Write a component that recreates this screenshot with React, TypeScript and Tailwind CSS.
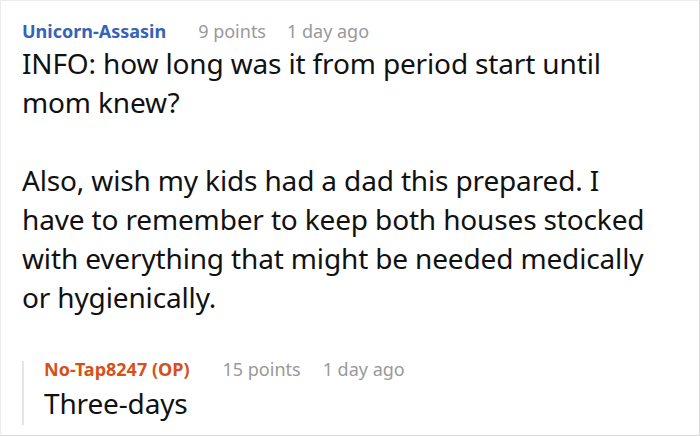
export default function App() {
  const font = { fontFamily: '"Noto Sans", "Open Sans", sans-serif' }
  return (
    <div
      className="w-[700px] h-[436px] bg-white border border-t-[#ececec] border-l-[#ececec] border-r-[#dadada] border-b-[#dadada] overflow-hidden"
      style={font}
    >
      <div className="pl-[21px] pt-[17px]">
        <div className="flex items-baseline text-[18px] leading-[26px]">
          <span className="font-bold text-[#3563b8]">Unicorn-Assasin</span>
          <span className="ml-[32px] text-[#999999]">9 points</span>
          <span className="ml-[21px] text-[#999999]">1 day ago</span>
        </div>
        <div className="mt-[0px] text-[28px] leading-[39px] text-[#111] tracking-[-0.15px]">
          <p>
            INFO: how long was it from period start until
            <br />
            mom knew?
          </p>
          <p className="mt-[39px]">
            Also, wish my kids had a dad this prepared. I
            <br />
            have to remember to keep both houses stocked
            <br />
            with everything that might be needed medically
            <br />
            or hygienically.
          </p>
        </div>
        <div className="mt-[44px] border-l-2 border-[#e6e6e6] pl-[20px] pb-[2px]">
          <div className="flex items-baseline text-[18px] leading-[16px]">
            <span className="font-bold text-[#d6501c]">No-Tap8247 (OP)</span>
            <span className="ml-[33px] text-[#999999]">15 points</span>
            <span className="ml-[22px] text-[#999999]">1 day ago</span>
          </div>
          <p className="mt-[7px] text-[28px] leading-[39px] text-[#111] tracking-[-0.15px]">Three-days</p>
        </div>
      </div>
    </div>
  )
}
